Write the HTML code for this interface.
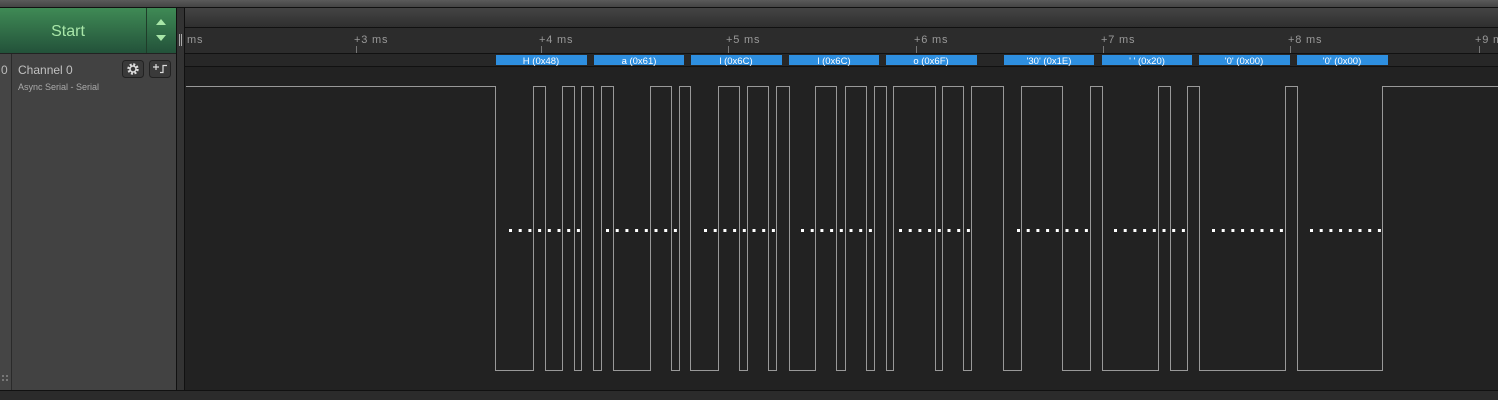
<!DOCTYPE html>
<html><head><meta charset="utf-8"><style>
html,body{margin:0;padding:0;background:#222;width:1498px;height:400px;overflow:hidden}
svg{display:block}
text{font-family:"Liberation Sans",sans-serif}
</style></head><body>
<svg width="1498" height="400" viewBox="0 0 1498 400" xmlns="http://www.w3.org/2000/svg">
<defs>
<linearGradient id="g1" x1="0" y1="0" x2="0" y2="1"><stop offset="0" stop-color="#3f8a55"/><stop offset="1" stop-color="#23523a"/></linearGradient>
<linearGradient id="g2" x1="0" y1="0" x2="0" y2="1"><stop offset="0" stop-color="#444"/><stop offset="1" stop-color="#2f2f2f"/></linearGradient>
<linearGradient id="g3" x1="0" y1="0" x2="0" y2="1"><stop offset="0" stop-color="#5a5a5a"/><stop offset="1" stop-color="#444"/></linearGradient>
<g id="d"><rect x="0" y="0" width="3" height="3"/><rect x="9.7" y="0" width="3" height="3"/><rect x="19.4" y="0" width="3" height="3"/><rect x="29.1" y="0" width="3" height="3"/><rect x="38.8" y="0" width="3" height="3"/><rect x="48.5" y="0" width="3" height="3"/><rect x="58.2" y="0" width="3" height="3"/><rect x="67.9" y="0" width="3" height="3"/></g>
</defs>
<rect width="1498" height="400" fill="#222"/>
<rect x="0" y="0" width="1498" height="7" fill="url(#g3)"/>
<rect x="0" y="7" width="1498" height="1" fill="#111"/>
<rect x="0" y="8" width="146" height="45" fill="url(#g1)"/>
<rect x="146" y="8" width="1" height="45" fill="#1f3d2a"/>
<rect x="147" y="8" width="29" height="45" fill="url(#g1)"/>
<text x="68" y="36" font-size="16" fill="#a8e6a8" text-anchor="middle">Start</text>
<path d="M161 19 L166 25 H156 Z" fill="#a8e6a8"/>
<path d="M156 35 H166 L161 41 Z" fill="#a8e6a8"/>
<rect x="0" y="53" width="176" height="1" fill="#222"/>
<rect x="0" y="54" width="176" height="336" fill="#454545"/>
<rect x="11" y="54" width="1" height="336" fill="#2a2a2a"/>
<rect x="12" y="54" width="164" height="336" fill="#424242"/>
<text x="1" y="74" font-size="12" fill="#bbb">0</text>
<text x="18" y="74" font-size="12" fill="#c0c0c0">Channel 0</text>
<text x="18" y="90" font-size="9" fill="#aaa">Async Serial - Serial</text>
<rect x="122.5" y="60.5" width="21" height="17" rx="3" fill="#3a3a3a" stroke="#222"/>
<circle cx="133" cy="69" r="4.5" fill="none" stroke="#ddd" stroke-width="2.4" stroke-dasharray="2 1.55"/>
<circle cx="133" cy="69" r="3" fill="none" stroke="#ddd" stroke-width="1.5"/>
<rect x="149.5" y="60.5" width="21" height="17" rx="3" fill="#3a3a3a" stroke="#222"/>
<path d="M153 67 H159 M156 64 V70 M160 72.5 H163 V65.5 H167" stroke="#ddd" stroke-width="1.2" fill="none"/>
<g fill="#777"><rect x="2" y="375" width="2" height="2"/><rect x="6" y="375" width="2" height="2"/><rect x="2" y="379" width="2" height="2"/><rect x="6" y="379" width="2" height="2"/></g>
<rect x="176" y="8" width="1" height="382" fill="#111"/>
<rect x="177" y="8" width="7" height="382" fill="#333"/>
<rect x="184" y="8" width="1" height="382" fill="#111"/>
<rect x="179" y="34" width="1" height="12" fill="#aaa"/><rect x="181" y="34" width="1" height="12" fill="#aaa"/>
<rect x="185" y="8" width="1313" height="19" fill="url(#g2)"/>
<rect x="185" y="27" width="1313" height="1" fill="#111"/>
<rect x="185" y="28" width="1313" height="25" fill="#2c2c2c"/>
<rect x="185" y="53" width="1313" height="1" fill="#111"/>
<rect x="185" y="54" width="1313" height="12" fill="#272727"/>
<rect x="185" y="66" width="1313" height="1" fill="#111"/>
<g font-size="11" fill="#999" letter-spacing="0.8">
<text x="187" y="43">ms</text>
<text x="354" y="43">+3 ms</text>
<text x="539" y="43">+4 ms</text>
<text x="726" y="43">+5 ms</text>
<text x="914" y="43">+6 ms</text>
<text x="1101" y="43">+7 ms</text>
<text x="1288" y="43">+8 ms</text>
<text x="1475" y="43">+9 ms</text>
</g>
<g fill="#777">
<rect x="356" y="46" width="1" height="7"/><rect x="541" y="46" width="1" height="7"/><rect x="728" y="46" width="1" height="7"/><rect x="916" y="46" width="1" height="7"/><rect x="1103" y="46" width="1" height="7"/><rect x="1290" y="46" width="1" height="7"/><rect x="1479" y="46" width="1" height="7"/>
</g>
<g fill="#2e8fe0">
<rect x="496" y="55" width="91" height="10"/><rect x="594" y="55" width="90" height="10"/><rect x="691" y="55" width="91" height="10"/><rect x="789" y="55" width="90" height="10"/><rect x="886" y="55" width="91" height="10"/><rect x="1004" y="55" width="90" height="10"/><rect x="1102" y="55" width="90" height="10"/><rect x="1199" y="55" width="91" height="10"/><rect x="1297" y="55" width="91" height="10"/>
</g>
<g font-size="9.5" fill="#fff" text-anchor="middle">
<text x="541" y="64">H (0x48)</text><text x="639" y="64">a (0x61)</text><text x="736" y="64">l (0x6C)</text><text x="834" y="64">l (0x6C)</text><text x="931" y="64">o (0x6F)</text><text x="1049" y="64">'30' (0x1E)</text><text x="1147" y="64">' ' (0x20)</text><text x="1244" y="64">'0' (0x00)</text><text x="1342" y="64">'0' (0x00)</text>
</g>
<path fill="none" stroke="#999" stroke-width="1" d="M186 86.5 H495.5 V370.5 H533.5 V86.5 H545.5 V370.5 H562.5 V86.5 H574.5 V370.5 H581.5 V86.5 H593.5 V370.5 H601.5 V86.5 H613.5 V370.5 H650.5 V86.5 H671.5 V370.5 H679.5 V86.5 H690.5 V370.5 H718.5 V86.5 H739.5 V370.5 H747.5 V86.5 H768.5 V370.5 H776.5 V86.5 H789.5 V370.5 H815.5 V86.5 H836.5 V370.5 H845.5 V86.5 H866.5 V370.5 H874.5 V86.5 H886.5 V370.5 H893.5 V86.5 H935.5 V370.5 H942.5 V86.5 H963.5 V370.5 H971.5 V86.5 H1003.5 V370.5 H1021.5 V86.5 H1062.5 V370.5 H1090.5 V86.5 H1102.5 V370.5 H1158.5 V86.5 H1170.5 V370.5 H1187.5 V86.5 H1199.5 V370.5 H1285.5 V86.5 H1297.5 V370.5 H1382.5 V86.5 H1498"/>
<g fill="#fff">
<use href="#d" x="509" y="229"/><use href="#d" x="606" y="229"/><use href="#d" x="704" y="229"/><use href="#d" x="801" y="229"/><use href="#d" x="899" y="229"/><use href="#d" x="1017" y="229"/><use href="#d" x="1114" y="229"/><use href="#d" x="1212" y="229"/><use href="#d" x="1310" y="229"/>
</g>
<rect x="0" y="390" width="1498" height="1" fill="#111"/>
<rect x="0" y="391" width="1498" height="9" fill="#2b2b2b"/>
</svg>
</body></html>
